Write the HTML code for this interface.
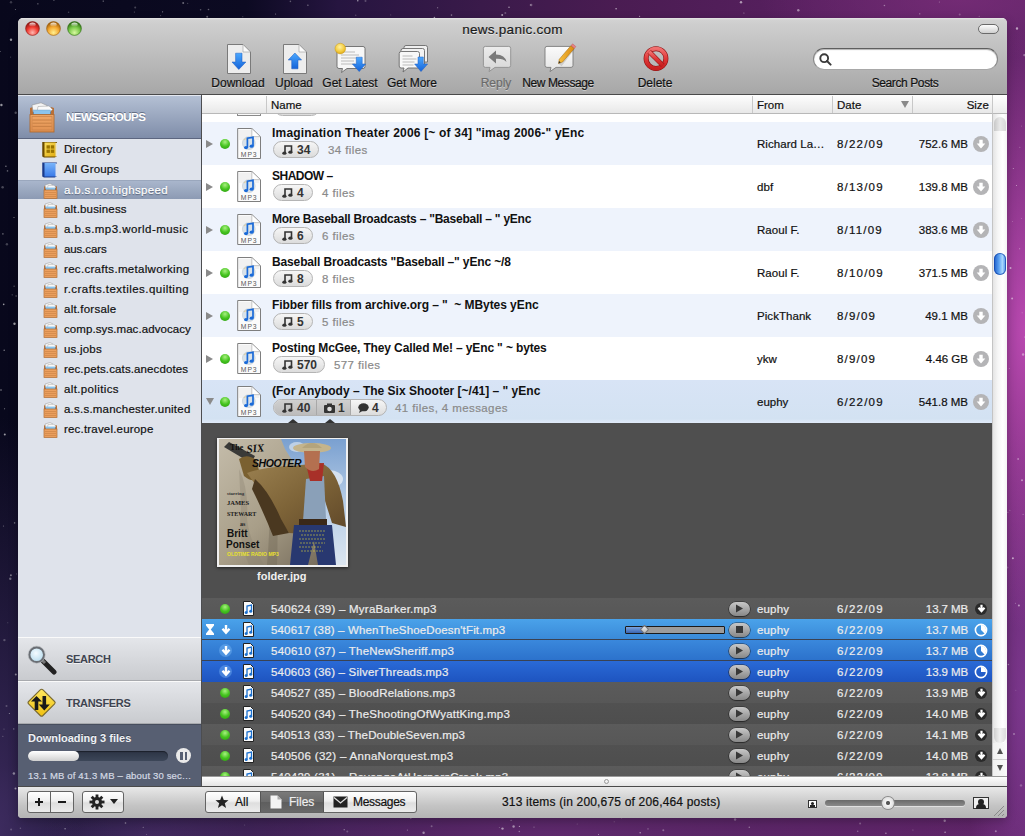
<!DOCTYPE html>
<html><head><meta charset="utf-8">
<style>
*{box-sizing:border-box;margin:0;padding:0}
html,body{width:1025px;height:836px;overflow:hidden}
body{position:relative;-webkit-text-stroke:.2px currentColor;font-family:"Liberation Sans",sans-serif;font-size:12px;color:#000;background:#1a1238}
.a{position:absolute}
.ttl,.pill,.pill b,svg,[style*="font-weight:bold"]{-webkit-text-stroke:0}
#bg{position:absolute;left:0;top:0;width:1025px;height:836px;
background:
 radial-gradient(ellipse 90px 300px at 1025px 330px,rgba(190,75,180,.95) 0%,rgba(160,60,160,0) 100%),
 radial-gradient(ellipse 60px 300px at 1025px 700px,rgba(130,60,150,.8) 0%,rgba(120,60,150,0) 100%),
 radial-gradient(ellipse 200px 60px at 960px 0px,rgba(120,45,120,.8) 0%,rgba(120,45,120,0) 100%),
 radial-gradient(ellipse 520px 90px at 560px 836px,rgba(95,42,110,.95) 0%,rgba(90,42,110,0) 100%),
 radial-gradient(ellipse 80px 420px at 0px 836px,rgba(62,44,96,.95) 0%,rgba(60,40,90,0) 100%),
 radial-gradient(ellipse 300px 80px at 150px 836px,rgba(62,44,96,.9) 0%,rgba(60,40,90,0) 100%),
 linear-gradient(90deg,#08081c 0%,#0c0a22 24%,#261540 33%,#3a1a4a 47%,#4a1c52 60%,#582060 80%,#602468 100%);}
#win{position:absolute;left:18px;top:18px;width:989px;height:800px;border-radius:5px 5px 4px 4px;overflow:hidden;background:#e0e0e0;box-shadow:0 3px 10px rgba(0,0,0,.25)}
#tb{position:absolute;left:0;top:0;width:989px;height:77px;background:linear-gradient(#e6e6e6 0,#d2d2d2 2px,#cecece 6px,#a7a7a7 76px);border-bottom:1px solid #4a4a4a}
.tl{position:absolute;top:4px;width:14px;height:14px;border-radius:50%}
.title{position:absolute;left:0;width:989px;top:4px;text-align:center;font-size:13.5px;letter-spacing:.25px;color:#1a1a1a;text-shadow:0 1px 0 rgba(255,255,255,.6)}
.tbl{position:absolute;top:58px;font-size:12px;color:#111;text-align:center;white-space:nowrap;text-shadow:0 1px 0 rgba(255,255,255,.45)}
#side{position:absolute;left:0;top:77px;width:184px;height:691px;background:#dfe3eb;border-right:1px solid #4c4d50}
#main{position:absolute;left:184px;top:77px;width:805px;height:691px;background:#4f4f4f}
#bot{position:absolute;left:0;top:768px;width:989px;height:32px;background:linear-gradient(#e8e8e8,#c4c4c4 60%,#b4b4b4);border-top:1px solid #4a4a4a}
.btn{position:absolute;top:4px;height:22px;border:1px solid #646464;border-radius:3px;background:linear-gradient(#ffffff,#f0f0f0 45%,#dedede 55%,#ececec)}
.si{position:absolute;left:0;width:183px;height:20px}
.si span{position:absolute;left:46px;top:3.5px;font-size:11.5px;white-space:nowrap;color:#111}
.crate{position:absolute;left:25px;top:3px}
.hdr{position:absolute;left:0;top:0;width:790px;height:19px;background:linear-gradient(#fefefe,#e8e8e8);border-bottom:1px solid #b8b8b8}
.hdr span{position:absolute;top:4px;font-size:11.5px;color:#111}
.hdiv{position:absolute;top:1px;width:1px;height:17px;background:#c8c8c8}
.row{position:absolute;left:0;width:790px;height:43px}
.tri{position:absolute;left:4px;top:18px;width:0;height:0;border-left:7px solid #8a8a8a;border-top:4px solid transparent;border-bottom:4px solid transparent}
.dot{position:absolute;left:18px;top:17px;width:10px;height:10px;border-radius:50%;background:radial-gradient(circle at 50% 30%,#a8f080 0,#46c420 50%,#2a9a10 100%)}
.mp3{position:absolute;left:35px;top:6px}
.ttl{position:absolute;left:70px;top:4px;font-size:12px;font-weight:bold;white-space:nowrap;color:#111}
.pill{position:absolute;left:71px;top:19px;height:17px;border-radius:9px;border:1px solid #b4b4b4;background:linear-gradient(#f6f6f6,#dcdcdc);white-space:nowrap;font-size:12px;font-weight:bold;color:#333}
.pill b{position:absolute;top:1px}
.cnt{position:absolute;top:22px;font-size:11.5px;letter-spacing:.4px;color:#8a8a8a;white-space:nowrap}
.col{position:absolute;top:15.5px;font-size:11.5px;color:#111;white-space:nowrap}
.sz{position:absolute;top:15.5px;right:24px;font-size:11.5px;color:#111;white-space:nowrap;letter-spacing:0}
.dl{position:absolute;left:771px;top:14px;width:16px;height:16px;border-radius:50%;background:#b4b4b6}
.frow{position:absolute;left:0;width:790px;height:21px}
.frow .t{position:absolute;left:69px;top:4.5px;font-size:11.5px;color:#ececec;white-space:nowrap}
.frow .c{position:absolute;top:4.5px;font-size:11.5px;letter-spacing:.15px;color:#ececec;white-space:nowrap}
.frow .s{position:absolute;right:24px;top:4.5px;font-size:11.5px;color:#ececec;white-space:nowrap;letter-spacing:-.1px}
.play{position:absolute;left:526.5px;top:3.5px;width:21px;height:14.5px;border-radius:8px;background:linear-gradient(#c8c8c8,#a4a4a4 55%,#888);box-shadow:0 0 0 .6px rgba(30,30,30,.8),0 1px 1px rgba(0,0,0,.4)}
.gdot{position:absolute;left:18px;top:6px;width:10px;height:10px;border-radius:50%;background:radial-gradient(circle at 50% 30%,#a8f080 0,#46c420 50%,#2a9a10 100%)}
</style></head><body>
<div id="bg"></div><svg class="a" style="left:0;top:0" width="1025" height="836"><circle cx="663.3" cy="830.2" r="1" fill="#fff" opacity="0.31"/><circle cx="4.2" cy="350.2" r="0.8" fill="#fff" opacity="0.44"/><circle cx="1009.3" cy="368.4" r="0.5" fill="#fff" opacity="0.34"/><circle cx="53.9" cy="0.2" r="0.6" fill="#fff" opacity="0.41"/><circle cx="749.3" cy="827.3" r="0.8" fill="#fff" opacity="0.39"/><circle cx="1009.9" cy="510.2" r="0.5" fill="#fff" opacity="0.39"/><circle cx="134.3" cy="11.9" r="0.5" fill="#fff" opacity="0.41"/><circle cx="187.7" cy="3.3" r="0.6" fill="#fff" opacity="0.27"/><circle cx="499.4" cy="827.5" r="0.6" fill="#fff" opacity="0.26"/><circle cx="451.5" cy="15.1" r="0.8" fill="#fff" opacity="0.41"/><circle cx="275.6" cy="14.1" r="0.5" fill="#fff" opacity="0.52"/><circle cx="355.7" cy="15.2" r="0.8" fill="#fff" opacity="0.21"/><circle cx="143.2" cy="827.2" r="0.5" fill="#fff" opacity="0.53"/><circle cx="14.6" cy="522.9" r="0.8" fill="#fff" opacity="0.37"/><circle cx="3.7" cy="304.4" r="0.8" fill="#fff" opacity="0.59"/><circle cx="365.5" cy="0.9" r="1" fill="#fff" opacity="0.23"/><circle cx="16.5" cy="573.9" r="0.6" fill="#fff" opacity="0.23"/><circle cx="1018.1" cy="459.0" r="0.8" fill="#fff" opacity="0.59"/><circle cx="959.7" cy="14.6" r="1" fill="#fff" opacity="0.23"/><circle cx="519.3" cy="831.5" r="0.8" fill="#fff" opacity="0.35"/><circle cx="200.6" cy="9.8" r="0.8" fill="#fff" opacity="0.30"/><circle cx="207.2" cy="16.8" r="1" fill="#fff" opacity="0.35"/><circle cx="1.4" cy="105.0" r="1.2" fill="#fff" opacity="0.57"/><circle cx="616.1" cy="8.7" r="0.8" fill="#fff" opacity="0.60"/><circle cx="6.9" cy="244.2" r="1.2" fill="#fff" opacity="0.23"/><circle cx="860.1" cy="823.4" r="1" fill="#fff" opacity="0.27"/><circle cx="2.9" cy="233.9" r="0.8" fill="#fff" opacity="0.37"/><circle cx="509.0" cy="7.3" r="0.8" fill="#fff" opacity="0.53"/><circle cx="1012.5" cy="221.4" r="0.5" fill="#fff" opacity="0.28"/><circle cx="431.6" cy="826.3" r="1" fill="#fff" opacity="0.27"/><circle cx="37.9" cy="3.8" r="0.6" fill="#fff" opacity="0.54"/><circle cx="208.5" cy="9.5" r="0.8" fill="#fff" opacity="0.36"/><circle cx="1012.9" cy="558.3" r="1" fill="#fff" opacity="0.58"/><circle cx="885.9" cy="833.2" r="0.8" fill="#fff" opacity="0.46"/><circle cx="183.2" cy="2.9" r="1" fill="#fff" opacity="0.39"/><circle cx="162.6" cy="11.8" r="0.6" fill="#fff" opacity="0.48"/><circle cx="0.4" cy="51.4" r="0.5" fill="#fff" opacity="0.36"/><circle cx="798.3" cy="10.3" r="1.2" fill="#fff" opacity="0.46"/><circle cx="1018.9" cy="605.5" r="1" fill="#fff" opacity="0.49"/><circle cx="6.5" cy="705.9" r="1" fill="#fff" opacity="0.23"/><circle cx="1021.5" cy="218.6" r="0.5" fill="#fff" opacity="0.25"/><circle cx="944.7" cy="820.7" r="1.2" fill="#fff" opacity="0.39"/><circle cx="434.4" cy="17.5" r="0.8" fill="#fff" opacity="0.57"/><circle cx="502.5" cy="828.6" r="1.2" fill="#fff" opacity="0.51"/><circle cx="1008.4" cy="664.5" r="0.8" fill="#fff" opacity="0.37"/><circle cx="125.5" cy="823.0" r="0.8" fill="#fff" opacity="0.46"/><circle cx="995.8" cy="831.2" r="1" fill="#fff" opacity="0.38"/><circle cx="423.6" cy="832.8" r="1.2" fill="#fff" opacity="0.46"/><circle cx="1007.5" cy="567.5" r="1" fill="#fff" opacity="0.20"/><circle cx="15.4" cy="9.6" r="0.5" fill="#fff" opacity="0.46"/><circle cx="884.4" cy="5.5" r="0.8" fill="#fff" opacity="0.39"/><circle cx="307.9" cy="5.2" r="0.6" fill="#fff" opacity="0.53"/><circle cx="13.8" cy="728.9" r="0.6" fill="#fff" opacity="0.51"/><circle cx="14.5" cy="323.7" r="1.2" fill="#fff" opacity="0.60"/><circle cx="437.7" cy="7.8" r="0.5" fill="#fff" opacity="0.59"/><circle cx="743.9" cy="13.0" r="0.6" fill="#fff" opacity="0.44"/><circle cx="290.4" cy="1.4" r="0.8" fill="#fff" opacity="0.31"/><circle cx="912.9" cy="830.0" r="0.6" fill="#fff" opacity="0.31"/><circle cx="1022.1" cy="312.7" r="0.5" fill="#fff" opacity="0.35"/><circle cx="347.3" cy="831.5" r="1" fill="#fff" opacity="0.23"/><circle cx="1016.5" cy="185.4" r="0.5" fill="#fff" opacity="0.58"/><circle cx="5.9" cy="166.3" r="0.8" fill="#fff" opacity="0.44"/><circle cx="10.3" cy="578.7" r="1.2" fill="#fff" opacity="0.36"/><circle cx="505.3" cy="12.9" r="1" fill="#fff" opacity="0.25"/><circle cx="577.2" cy="824.1" r="0.5" fill="#fff" opacity="0.27"/><circle cx="4.8" cy="434.6" r="1" fill="#fff" opacity="0.59"/><circle cx="979.2" cy="16.3" r="0.6" fill="#fff" opacity="0.30"/><circle cx="1010.5" cy="268.0" r="1" fill="#fff" opacity="0.54"/><circle cx="12.2" cy="294.8" r="0.6" fill="#fff" opacity="0.33"/><circle cx="534.0" cy="827.1" r="0.6" fill="#fff" opacity="0.37"/><circle cx="945.1" cy="832.3" r="0.8" fill="#fff" opacity="0.51"/><circle cx="4.4" cy="640.1" r="1.2" fill="#fff" opacity="0.25"/><circle cx="407.4" cy="830.1" r="0.6" fill="#fff" opacity="0.37"/><circle cx="11.0" cy="39.7" r="1.2" fill="#fff" opacity="0.56"/><circle cx="10.6" cy="57.1" r="0.6" fill="#fff" opacity="0.24"/><circle cx="640.2" cy="832.8" r="0.8" fill="#fff" opacity="0.48"/><circle cx="11.0" cy="2.3" r="1.2" fill="#fff" opacity="0.20"/><circle cx="1022.0" cy="480.3" r="1" fill="#fff" opacity="0.44"/><circle cx="639.6" cy="16.3" r="0.6" fill="#fff" opacity="0.56"/><circle cx="357.8" cy="0.8" r="0.8" fill="#fff" opacity="0.56"/><circle cx="1023.1" cy="514.4" r="0.6" fill="#fff" opacity="0.31"/><circle cx="11.1" cy="829.4" r="1" fill="#fff" opacity="0.23"/><circle cx="735.1" cy="819.5" r="1.2" fill="#fff" opacity="0.31"/><circle cx="1024.9" cy="337.1" r="0.5" fill="#fff" opacity="0.58"/><circle cx="741.0" cy="2.3" r="1.2" fill="#fff" opacity="0.54"/><circle cx="1015.4" cy="603.3" r="0.5" fill="#fff" opacity="0.38"/><circle cx="1013.3" cy="168.5" r="0.5" fill="#fff" opacity="0.57"/><circle cx="14.1" cy="286.2" r="0.6" fill="#fff" opacity="0.39"/><circle cx="65.1" cy="828.8" r="0.8" fill="#fff" opacity="0.43"/><circle cx="1017.0" cy="28.5" r="1.2" fill="#fff" opacity="0.56"/><circle cx="1021.5" cy="126.1" r="0.6" fill="#fff" opacity="0.20"/><circle cx="1012.1" cy="298.4" r="1" fill="#fff" opacity="0.49"/><circle cx="242.8" cy="16.8" r="0.5" fill="#fff" opacity="0.36"/><circle cx="13.9" cy="773.5" r="1.2" fill="#fff" opacity="0.46"/><circle cx="160.6" cy="15.6" r="0.6" fill="#fff" opacity="0.26"/><circle cx="135.2" cy="7.6" r="1" fill="#fff" opacity="0.24"/><circle cx="410.9" cy="818.5" r="0.5" fill="#fff" opacity="0.45"/><circle cx="15.8" cy="674.4" r="1" fill="#fff" opacity="0.47"/><circle cx="511.1" cy="820.4" r="0.6" fill="#fff" opacity="0.39"/><circle cx="4.0" cy="729.1" r="0.6" fill="#fff" opacity="0.26"/><circle cx="1019.7" cy="248.8" r="0.5" fill="#fff" opacity="0.52"/><circle cx="15.7" cy="112.7" r="1.2" fill="#fff" opacity="0.29"/><circle cx="20.4" cy="828.3" r="0.8" fill="#fff" opacity="0.23"/><circle cx="2.6" cy="187.2" r="1.2" fill="#fff" opacity="0.26"/><circle cx="10.9" cy="575.3" r="1" fill="#fff" opacity="0.42"/><circle cx="146.6" cy="834.6" r="0.5" fill="#fff" opacity="0.30"/><circle cx="513.6" cy="826.5" r="1.2" fill="#fff" opacity="0.49"/><circle cx="1015.8" cy="690.2" r="0.5" fill="#fff" opacity="0.23"/><circle cx="1024.4" cy="55.1" r="1.2" fill="#fff" opacity="0.35"/><circle cx="530.3" cy="4.9" r="0.6" fill="#fff" opacity="0.35"/><circle cx="390.7" cy="14.9" r="0.6" fill="#fff" opacity="0.20"/><circle cx="1019.8" cy="147.3" r="0.5" fill="#fff" opacity="0.38"/><circle cx="598.5" cy="834.4" r="0.5" fill="#fff" opacity="0.55"/><circle cx="531.2" cy="5.0" r="1.2" fill="#fff" opacity="0.31"/><circle cx="1021.0" cy="785.4" r="1.2" fill="#fff" opacity="0.23"/><circle cx="502.2" cy="14.9" r="1" fill="#fff" opacity="0.56"/><circle cx="103.2" cy="1.1" r="0.6" fill="#fff" opacity="0.58"/><circle cx="15.5" cy="788.6" r="1" fill="#fff" opacity="0.52"/><circle cx="1023.1" cy="354.5" r="1.2" fill="#fff" opacity="0.41"/><circle cx="614.2" cy="821.7" r="0.5" fill="#fff" opacity="0.29"/><circle cx="2.9" cy="736.3" r="0.5" fill="#fff" opacity="0.40"/><circle cx="4.6" cy="408.8" r="0.5" fill="#fff" opacity="0.58"/><circle cx="344.2" cy="829.7" r="0.6" fill="#fff" opacity="0.48"/><circle cx="519.4" cy="826.4" r="0.6" fill="#fff" opacity="0.54"/><circle cx="9.3" cy="713.5" r="0.5" fill="#fff" opacity="0.58"/><circle cx="3.5" cy="526.0" r="0.6" fill="#fff" opacity="0.38"/><circle cx="919.8" cy="13.8" r="0.6" fill="#fff" opacity="0.52"/><circle cx="16.2" cy="295.9" r="1" fill="#fff" opacity="0.21"/><circle cx="648.0" cy="828.9" r="0.8" fill="#fff" opacity="0.24"/><circle cx="7.5" cy="170.9" r="0.8" fill="#fff" opacity="0.35"/><circle cx="244.6" cy="825.0" r="0.6" fill="#fff" opacity="0.20"/><circle cx="1.0" cy="390.0" r="1" fill="#fff" opacity="0.30"/><circle cx="939.3" cy="1.9" r="0.5" fill="#fff" opacity="0.42"/><circle cx="7.8" cy="622.8" r="0.5" fill="#fff" opacity="0.27"/><circle cx="1007.9" cy="512.2" r="0.5" fill="#fff" opacity="0.42"/><circle cx="621.6" cy="818.1" r="0.6" fill="#fff" opacity="0.20"/><circle cx="857.7" cy="831.2" r="0.8" fill="#fff" opacity="0.31"/><circle cx="14.0" cy="217.5" r="0.5" fill="#fff" opacity="0.60"/><circle cx="68.6" cy="12.2" r="0.8" fill="#fff" opacity="0.23"/><circle cx="1014.0" cy="734.1" r="1" fill="#fff" opacity="0.34"/></svg>
<div id="win">
<div id="tb">
<svg class="a" style="left:7px;top:3px" width="15" height="15" viewBox="0 0 15 15"><defs><radialGradient id="tlr" cx=".5" cy=".8" r=".75"><stop offset="0" stop-color="#ffb8b0"/><stop offset=".55" stop-color="#f03a30"/><stop offset="1" stop-color="#8a1410"/></radialGradient><linearGradient id="tlrh" x1="0" y1="0" x2="0" y2="1"><stop offset="0" stop-color="#fff" stop-opacity=".9"/><stop offset="1" stop-color="#fff" stop-opacity="0"/></linearGradient></defs><circle cx="7.5" cy="7.5" r="6.9" fill="url(#tlr)" stroke="#8a1410" stroke-width=".6"/><ellipse cx="7.5" cy="3.6" rx="3.2" ry="2.2" fill="url(#tlrh)"/></svg>
<svg class="a" style="left:28px;top:3px" width="15" height="15" viewBox="0 0 15 15"><defs><radialGradient id="tly" cx=".5" cy=".8" r=".75"><stop offset="0" stop-color="#fff090"/><stop offset=".55" stop-color="#f4a830"/><stop offset="1" stop-color="#9a5a08"/></radialGradient><linearGradient id="tlyh" x1="0" y1="0" x2="0" y2="1"><stop offset="0" stop-color="#fff" stop-opacity=".9"/><stop offset="1" stop-color="#fff" stop-opacity="0"/></linearGradient></defs><circle cx="7.5" cy="7.5" r="6.9" fill="url(#tly)" stroke="#9a5a08" stroke-width=".6"/><ellipse cx="7.5" cy="3.6" rx="3.2" ry="2.2" fill="url(#tlyh)"/></svg>
<svg class="a" style="left:49px;top:3px" width="15" height="15" viewBox="0 0 15 15"><defs><radialGradient id="tlg" cx=".5" cy=".8" r=".75"><stop offset="0" stop-color="#d8f8a0"/><stop offset=".55" stop-color="#78c848"/><stop offset="1" stop-color="#2a6a10"/></radialGradient><linearGradient id="tlgh" x1="0" y1="0" x2="0" y2="1"><stop offset="0" stop-color="#fff" stop-opacity=".9"/><stop offset="1" stop-color="#fff" stop-opacity="0"/></linearGradient></defs><circle cx="7.5" cy="7.5" r="6.9" fill="url(#tlg)" stroke="#2a6a10" stroke-width=".6"/><ellipse cx="7.5" cy="3.6" rx="3.2" ry="2.2" fill="url(#tlgh)"/></svg>
<div class="title">news.panic.com</div>
<div class="tbl" style="left:160px;width:120px;color:#111">Download</div>
<div class="tbl" style="left:216px;width:120px;color:#111">Upload</div>
<div class="tbl" style="left:272px;width:120px;color:#111">Get Latest</div>
<div class="tbl" style="left:334px;width:120px;color:#111">Get More</div>
<div class="tbl" style="left:418px;width:120px;color:#6a6a6a">Reply</div>
<div class="tbl" style="left:480px;width:120px;color:#111;letter-spacing:-.4px">New Message</div>
<div class="tbl" style="left:577px;width:120px;color:#111">Delete</div>
<div class="tbl" style="left:827px;width:120px;color:#111;letter-spacing:-.4px">Search Posts</div>
<svg class="a" style="left:207px;top:26px" width="28" height="31" viewBox="0 0 28 31"><defs><linearGradient id="ag207" x1="0" y1="0" x2="0" y2="1"><stop offset="0" stop-color="#4aa8ff"/><stop offset="1" stop-color="#1462d8"/></linearGradient></defs><path d="M2.5 .5 H18 L25.5 8 V29.5 H2.5 Z" fill="#ededed" stroke="#7a7a7a"/><path d="M18 .5 V8 H25.5Z" fill="#fafafa" stroke="#9a9a9a" stroke-width=".6"/><path d="M10.6 9.2 H17 V18 H20.9 L13.8 25.5 L7 18 H10.6Z" fill="url(#ag207)" stroke="#1a5ac0" stroke-width=".5"/></svg>
<svg class="a" style="left:263px;top:26px" width="28" height="31" viewBox="0 0 28 31"><defs><linearGradient id="ag263" x1="0" y1="0" x2="0" y2="1"><stop offset="0" stop-color="#4aa8ff"/><stop offset="1" stop-color="#1462d8"/></linearGradient></defs><path d="M2.5 .5 H18 L25.5 8 V29.5 H2.5 Z" fill="#ededed" stroke="#7a7a7a"/><path d="M18 .5 V8 H25.5Z" fill="#fafafa" stroke="#9a9a9a" stroke-width=".6"/><path d="M13.9 9 L20.6 16 H17 V24.8 H10.7 V16 H7.2Z" fill="url(#ag263)" stroke="#1a5ac0" stroke-width=".5"/></svg>
<svg class="a" style="left:315px;top:24px" width="36" height="34" viewBox="0 0 36 34"><defs><linearGradient id="gl" x1="0" y1="0" x2="0" y2="1"><stop offset="0" stop-color="#4aa8ff"/><stop offset="1" stop-color="#1462d8"/></linearGradient><radialGradient id="yd" cx=".45" cy=".35" r=".7"><stop offset="0" stop-color="#fff2a0"/><stop offset=".6" stop-color="#f4cc40"/><stop offset="1" stop-color="#d8a010"/></radialGradient></defs><path d="M6 4.5 H30 Q32 4.5 32 6.5 V24.5 Q32 26.5 30 26.5 H14 L8.5 30.5 L9.5 26.5 H6 Q4 26.5 4 24.5 V6.5 Q4 4.5 6 4.5Z" fill="#f7f7f7" stroke="#6a6a6a" stroke-width=".9"/><path d="M8 10h14M8 13h18M8 16h16M8 19h13M8 22h14" stroke="#a0a0a0" stroke-width=".7"/><circle cx="7.3" cy="6.6" r="5.3" fill="url(#yd)" stroke="#c89a20" stroke-width=".5"/><path d="M23.3 15.2 H29.2 V22 H32.6 L26.2 29.6 L19.4 22 H23.3Z" fill="url(#gl)" stroke="#1a5ac0" stroke-width=".5"/></svg>
<svg class="a" style="left:379px;top:24px" width="34" height="34" viewBox="0 0 34 34"><defs><linearGradient id="gm" x1="0" y1="0" x2="0" y2="1"><stop offset="0" stop-color="#4aa8ff"/><stop offset="1" stop-color="#1462d8"/></linearGradient></defs><path d="M9 3.5 H28.5 Q30.5 3.5 30.5 5.5 V20 H7 V5.5 Q7 3.5 9 3.5Z" fill="#efefef" stroke="#6a6a6a" stroke-width=".9"/><path d="M6 6.5 H25.5 Q27.5 6.5 27.5 8.5 V23 H4 V8.5 Q4 6.5 6 6.5Z" fill="#f3f3f3" stroke="#6a6a6a" stroke-width=".9"/><path d="M4.2 9.5 H20.5 Q22.5 9.5 22.5 11.5 V24 Q22.5 26 20.5 26 H11 L6 30 L7 26 H4.2 Q2.2 26 2.2 24 V11.5 Q2.2 9.5 4.2 9.5Z" fill="#f8f8f8" stroke="#6a6a6a" stroke-width=".9"/><path d="M5.5 14h10M5.5 17h14M5.5 20h12M5.5 23h11" stroke="#a0a0a0" stroke-width=".7"/><path d="M21 15 H26.3 V22 H30.6 L24 29.6 L17.6 22 H21Z" fill="url(#gm)" stroke="#1a5ac0" stroke-width=".5"/></svg>
<svg class="a" style="left:464px;top:26px" width="32" height="30" viewBox="0 0 32 30"><defs><linearGradient id="rb" x1="0" y1="0" x2="0" y2="1"><stop offset="0" stop-color="#ececec"/><stop offset="1" stop-color="#d6d6d6"/></linearGradient></defs><path d="M3.4 2.4 H26.7 Q28.7 2.4 28.7 4.4 V21.4 Q28.7 23.4 26.7 23.4 H13 L7 27.6 L8 23.4 H3.4 Q1.4 23.4 1.4 21.4 V4.4 Q1.4 2.4 3.4 2.4Z" fill="url(#rb)" stroke="#8e8e8e" stroke-width=".9"/><path d="M6.5 13 L14 6.5 V10.5 Q23 10.5 24.5 18 Q21 14.2 14 14.8 V19.5Z" fill="#7a7a7a"/></svg>
<svg class="a" style="left:525px;top:24px" width="34" height="32" viewBox="0 0 34 32"><defs><linearGradient id="nb" x1="0" y1="0" x2="0" y2="1"><stop offset="0" stop-color="#fbfbfb"/><stop offset="1" stop-color="#e4e4e4"/></linearGradient><linearGradient id="pc" x1="0" y1="0" x2="1" y2="0"><stop offset="0" stop-color="#f8c040"/><stop offset="1" stop-color="#d88a10"/></linearGradient></defs><path d="M4 4.4 H28 Q30 4.4 30 6.4 V23.4 Q30 25.4 28 25.4 H13 L7 29.6 L8 25.4 H4 Q2 25.4 2 23.4 V6.4 Q2 4.4 4 4.4Z" fill="url(#nb)" stroke="#7a7a7a" stroke-width=".9"/><path d="M17 23 L30 6" stroke="#000" stroke-opacity=".12" stroke-width="4"/><path d="M15.5 21.6 L16.3 17.2 L28 3.6 L31.3 6.4 L19.6 20 Z" fill="url(#pc)" stroke="#a06a10" stroke-width=".5"/><path d="M28 3.6 L29.6 1.8 L32.9 4.6 L31.3 6.4Z" fill="#e88080" stroke="#b05050" stroke-width=".4"/><path d="M15.5 21.6 L16 19 L17.8 20.6Z" fill="#333"/></svg>
<svg class="a" style="left:625px;top:27px" width="26" height="27" viewBox="0 0 26 27"><defs><linearGradient id="dg" x1="0" y1="0" x2="0" y2="1"><stop offset="0" stop-color="#f07070"/><stop offset=".5" stop-color="#e03838"/><stop offset="1" stop-color="#c82020"/></linearGradient></defs><circle cx="13" cy="13.6" r="9.9" fill="none" stroke="#8a1010" stroke-width="5"/><circle cx="13" cy="13.6" r="9.9" fill="none" stroke="url(#dg)" stroke-width="3.8"/><path d="M6.2 6.8 L19.8 20.4" stroke="#9a1818" stroke-width="4.8"/><path d="M6.2 6.8 L19.8 20.4" stroke="url(#dg)" stroke-width="3.6"/></svg>
<div class="a" style="left:795px;top:30px;width:185px;height:22px;border-radius:11px;background:#fff;border:1px solid;border-color:#5e5e5e #868686 #a8a8a8;box-shadow:inset 0 1px 1px rgba(0,0,0,.3)"><svg class="a" style="left:4.5px;top:4px" width="13" height="13" viewBox="0 0 13 13"><circle cx="5.2" cy="5.2" r="3.9" fill="none" stroke="#3a3a3a" stroke-width="1.9"/><path d="M8 8 L11.6 11.6" stroke="#3a3a3a" stroke-width="2" stroke-linecap="round"/></svg></div>
<div class="a" style="left:960px;top:6px;width:21px;height:10px;border-radius:5px;border:1px solid #6a6a6a;background:linear-gradient(#fdfdfd,#cfcfcf)"></div>
</div>
<div id="side">
<div class="a" style="left:0;top:0;width:183px;height:44px;background:linear-gradient(#b4c0d4,#7f8da9);border-top:1px solid #e4e8f0;border-bottom:1px solid #5c6680">
<svg class="a" style="left:11px;top:6px" width="27" height="32" viewBox="0 0 27 32"><defs><linearGradient id="cf" x1="0" y1="0" x2="0" y2="1"><stop offset="0" stop-color="#f0a868"/><stop offset="1" stop-color="#e09050"/></linearGradient></defs><path d="M1 6 L4 5 V13 H1Z M22 5 L25 6 V13 H22Z" fill="#b87038"/><rect x="4" y="6" width="18" height="7" fill="#4a3a30"/><path d="M3 3 L12 0.8 L18 3.5 L16 9 L4 10Z" fill="#f4f4f4" stroke="#888" stroke-width=".5"/><path d="M9 4.5 L20 4 L23.5 7.5 L21 10 L8 10Z" fill="#fafafa" stroke="#999" stroke-width=".5"/><rect x="4.5" y="8" width="17" height="4.6" fill="#8cc4ec" stroke="#6a9ac0" stroke-width=".4"/><rect x="1" y="12.6" width="24" height="17.4" fill="url(#cf)" stroke="#b06a30" stroke-width=".9"/><rect x="3" y="14.6" width="20" height="13.4" fill="none" stroke="#c88048" stroke-width=".7"/><path d="M3.5 18h19M3.5 21.2h19M3.5 24.4h19" stroke="#c07a40" stroke-width=".8"/></svg>
<div class="a" style="left:48px;top:15px;font-size:11.5px;font-weight:bold;letter-spacing:-.5px;color:#fff;text-shadow:0 -1px 0 rgba(60,70,90,.6)">NEWSGROUPS</div></div>
<div class="si" style="top:44px"><svg class="a" style="left:22px;top:2px" width="18" height="17" viewBox="0 0 16 17" preserveAspectRatio="none"><defs><linearGradient id="bky" x1="0" y1="0" x2="1" y2="1"><stop offset="0" stop-color="#fbe060"/><stop offset="1" stop-color="#e0ac10"/></linearGradient></defs><path d="M2 1 H15 V15.5 L13 16.5 H3.5 L2 15.5Z" fill="#6a4a00"/><rect x="4" y="1.5" width="10" height="14" fill="url(#bky)"/><rect x="13.8" y="2" width="1.2" height="13.5" fill="#fffbe0"/><rect x="5.8" y="4.3" width="3" height="3.3" fill="#9a7400"/><rect x="9.6" y="4.3" width="3" height="3.3" fill="#9a7400"/><rect x="5.8" y="8.6" width="3" height="3.3" fill="#9a7400"/><rect x="9.6" y="8.6" width="3" height="3.3" fill="#9a7400"/></svg><span style="letter-spacing:.3px">Directory</span></div>
<div class="si" style="top:64px"><svg class="a" style="left:22px;top:2px" width="18" height="17" viewBox="0 0 16 17" preserveAspectRatio="none"><defs><linearGradient id="bkb" x1="0" y1="0" x2="0" y2="1"><stop offset="0" stop-color="#78b4fa"/><stop offset="1" stop-color="#3a7ae8"/></linearGradient></defs><path d="M2 1.5 H15 V15.5 L13 16.5 H3.5 L2 15.5Z" fill="#1a3a8a"/><rect x="4" y="2" width="10" height="13.5" fill="url(#bkb)"/><rect x="13.8" y="2.5" width="1.2" height="13" fill="#f4f8ff"/></svg><span style="letter-spacing:.15px">All Groups</span></div>
<div class="si" style="top:85px;height:19px;background:linear-gradient(#a9b6cc,#8c9ab3);border-top:1px solid #9aa7bd"><div style="position:absolute;left:0;top:-1px"><svg class="crate" width="15" height="16" viewBox="0 0 15 16"><path d="M1 3.5 L2.5 3 V7 H1Z M12.5 3 L14 3.5 V7 H12.5Z" fill="#b87038"/><rect x="2.5" y="3.5" width="10" height="3.5" fill="#4a3a30"/><path d="M2 2 L7 .5 L10 2 L9 5 L2.5 5.5Z" fill="#f4f4f4" stroke="#888" stroke-width=".4"/><path d="M5 2.6 L11 2.3 L13 4.2 L11.5 5.5 L4.5 5.5Z" fill="#fafafa" stroke="#999" stroke-width=".4"/><rect x="2.8" y="4.6" width="9.4" height="2.6" fill="#8cc4ec"/><rect x="1" y="7" width="13" height="8.5" fill="#eca060" stroke="#b06a30" stroke-width=".7"/><path d="M2 9.6h11M2 11.6h11M2 13.6h11" stroke="#c47c40" stroke-width=".6"/></svg></div><span style="color:#fff;text-shadow:0 1px 1px rgba(40,50,70,.6);top:2.5px;letter-spacing:0.36px">a.b.s.r.o.highspeed</span></div>
<div class="si" style="top:104px"><svg class="crate" width="15" height="16" viewBox="0 0 15 16"><path d="M1 3.5 L2.5 3 V7 H1Z M12.5 3 L14 3.5 V7 H12.5Z" fill="#b87038"/><rect x="2.5" y="3.5" width="10" height="3.5" fill="#4a3a30"/><path d="M2 2 L7 .5 L10 2 L9 5 L2.5 5.5Z" fill="#f4f4f4" stroke="#888" stroke-width=".4"/><path d="M5 2.6 L11 2.3 L13 4.2 L11.5 5.5 L4.5 5.5Z" fill="#fafafa" stroke="#999" stroke-width=".4"/><rect x="2.8" y="4.6" width="9.4" height="2.6" fill="#8cc4ec"/><rect x="1" y="7" width="13" height="8.5" fill="#eca060" stroke="#b06a30" stroke-width=".7"/><path d="M2 9.6h11M2 11.6h11M2 13.6h11" stroke="#c47c40" stroke-width=".6"/></svg><span style="letter-spacing:0.17px">alt.business</span></div>
<div class="si" style="top:124px"><svg class="crate" width="15" height="16" viewBox="0 0 15 16"><path d="M1 3.5 L2.5 3 V7 H1Z M12.5 3 L14 3.5 V7 H12.5Z" fill="#b87038"/><rect x="2.5" y="3.5" width="10" height="3.5" fill="#4a3a30"/><path d="M2 2 L7 .5 L10 2 L9 5 L2.5 5.5Z" fill="#f4f4f4" stroke="#888" stroke-width=".4"/><path d="M5 2.6 L11 2.3 L13 4.2 L11.5 5.5 L4.5 5.5Z" fill="#fafafa" stroke="#999" stroke-width=".4"/><rect x="2.8" y="4.6" width="9.4" height="2.6" fill="#8cc4ec"/><rect x="1" y="7" width="13" height="8.5" fill="#eca060" stroke="#b06a30" stroke-width=".7"/><path d="M2 9.6h11M2 11.6h11M2 13.6h11" stroke="#c47c40" stroke-width=".6"/></svg><span style="letter-spacing:0.45px">a.b.s.mp3.world-music</span></div>
<div class="si" style="top:144px"><svg class="crate" width="15" height="16" viewBox="0 0 15 16"><path d="M1 3.5 L2.5 3 V7 H1Z M12.5 3 L14 3.5 V7 H12.5Z" fill="#b87038"/><rect x="2.5" y="3.5" width="10" height="3.5" fill="#4a3a30"/><path d="M2 2 L7 .5 L10 2 L9 5 L2.5 5.5Z" fill="#f4f4f4" stroke="#888" stroke-width=".4"/><path d="M5 2.6 L11 2.3 L13 4.2 L11.5 5.5 L4.5 5.5Z" fill="#fafafa" stroke="#999" stroke-width=".4"/><rect x="2.8" y="4.6" width="9.4" height="2.6" fill="#8cc4ec"/><rect x="1" y="7" width="13" height="8.5" fill="#eca060" stroke="#b06a30" stroke-width=".7"/><path d="M2 9.6h11M2 11.6h11M2 13.6h11" stroke="#c47c40" stroke-width=".6"/></svg><span style="letter-spacing:-0.1px">aus.cars</span></div>
<div class="si" style="top:164px"><svg class="crate" width="15" height="16" viewBox="0 0 15 16"><path d="M1 3.5 L2.5 3 V7 H1Z M12.5 3 L14 3.5 V7 H12.5Z" fill="#b87038"/><rect x="2.5" y="3.5" width="10" height="3.5" fill="#4a3a30"/><path d="M2 2 L7 .5 L10 2 L9 5 L2.5 5.5Z" fill="#f4f4f4" stroke="#888" stroke-width=".4"/><path d="M5 2.6 L11 2.3 L13 4.2 L11.5 5.5 L4.5 5.5Z" fill="#fafafa" stroke="#999" stroke-width=".4"/><rect x="2.8" y="4.6" width="9.4" height="2.6" fill="#8cc4ec"/><rect x="1" y="7" width="13" height="8.5" fill="#eca060" stroke="#b06a30" stroke-width=".7"/><path d="M2 9.6h11M2 11.6h11M2 13.6h11" stroke="#c47c40" stroke-width=".6"/></svg><span style="letter-spacing:0.31px">rec.crafts.metalworking</span></div>
<div class="si" style="top:184px"><svg class="crate" width="15" height="16" viewBox="0 0 15 16"><path d="M1 3.5 L2.5 3 V7 H1Z M12.5 3 L14 3.5 V7 H12.5Z" fill="#b87038"/><rect x="2.5" y="3.5" width="10" height="3.5" fill="#4a3a30"/><path d="M2 2 L7 .5 L10 2 L9 5 L2.5 5.5Z" fill="#f4f4f4" stroke="#888" stroke-width=".4"/><path d="M5 2.6 L11 2.3 L13 4.2 L11.5 5.5 L4.5 5.5Z" fill="#fafafa" stroke="#999" stroke-width=".4"/><rect x="2.8" y="4.6" width="9.4" height="2.6" fill="#8cc4ec"/><rect x="1" y="7" width="13" height="8.5" fill="#eca060" stroke="#b06a30" stroke-width=".7"/><path d="M2 9.6h11M2 11.6h11M2 13.6h11" stroke="#c47c40" stroke-width=".6"/></svg><span style="letter-spacing:0.46px">r.crafts.textiles.quilting</span></div>
<div class="si" style="top:204px"><svg class="crate" width="15" height="16" viewBox="0 0 15 16"><path d="M1 3.5 L2.5 3 V7 H1Z M12.5 3 L14 3.5 V7 H12.5Z" fill="#b87038"/><rect x="2.5" y="3.5" width="10" height="3.5" fill="#4a3a30"/><path d="M2 2 L7 .5 L10 2 L9 5 L2.5 5.5Z" fill="#f4f4f4" stroke="#888" stroke-width=".4"/><path d="M5 2.6 L11 2.3 L13 4.2 L11.5 5.5 L4.5 5.5Z" fill="#fafafa" stroke="#999" stroke-width=".4"/><rect x="2.8" y="4.6" width="9.4" height="2.6" fill="#8cc4ec"/><rect x="1" y="7" width="13" height="8.5" fill="#eca060" stroke="#b06a30" stroke-width=".7"/><path d="M2 9.6h11M2 11.6h11M2 13.6h11" stroke="#c47c40" stroke-width=".6"/></svg><span style="letter-spacing:0.24px">alt.forsale</span></div>
<div class="si" style="top:224px"><svg class="crate" width="15" height="16" viewBox="0 0 15 16"><path d="M1 3.5 L2.5 3 V7 H1Z M12.5 3 L14 3.5 V7 H12.5Z" fill="#b87038"/><rect x="2.5" y="3.5" width="10" height="3.5" fill="#4a3a30"/><path d="M2 2 L7 .5 L10 2 L9 5 L2.5 5.5Z" fill="#f4f4f4" stroke="#888" stroke-width=".4"/><path d="M5 2.6 L11 2.3 L13 4.2 L11.5 5.5 L4.5 5.5Z" fill="#fafafa" stroke="#999" stroke-width=".4"/><rect x="2.8" y="4.6" width="9.4" height="2.6" fill="#8cc4ec"/><rect x="1" y="7" width="13" height="8.5" fill="#eca060" stroke="#b06a30" stroke-width=".7"/><path d="M2 9.6h11M2 11.6h11M2 13.6h11" stroke="#c47c40" stroke-width=".6"/></svg><span style="letter-spacing:0.08px">comp.sys.mac.advocacy</span></div>
<div class="si" style="top:244px"><svg class="crate" width="15" height="16" viewBox="0 0 15 16"><path d="M1 3.5 L2.5 3 V7 H1Z M12.5 3 L14 3.5 V7 H12.5Z" fill="#b87038"/><rect x="2.5" y="3.5" width="10" height="3.5" fill="#4a3a30"/><path d="M2 2 L7 .5 L10 2 L9 5 L2.5 5.5Z" fill="#f4f4f4" stroke="#888" stroke-width=".4"/><path d="M5 2.6 L11 2.3 L13 4.2 L11.5 5.5 L4.5 5.5Z" fill="#fafafa" stroke="#999" stroke-width=".4"/><rect x="2.8" y="4.6" width="9.4" height="2.6" fill="#8cc4ec"/><rect x="1" y="7" width="13" height="8.5" fill="#eca060" stroke="#b06a30" stroke-width=".7"/><path d="M2 9.6h11M2 11.6h11M2 13.6h11" stroke="#c47c40" stroke-width=".6"/></svg><span style="letter-spacing:0.21px">us.jobs</span></div>
<div class="si" style="top:264px"><svg class="crate" width="15" height="16" viewBox="0 0 15 16"><path d="M1 3.5 L2.5 3 V7 H1Z M12.5 3 L14 3.5 V7 H12.5Z" fill="#b87038"/><rect x="2.5" y="3.5" width="10" height="3.5" fill="#4a3a30"/><path d="M2 2 L7 .5 L10 2 L9 5 L2.5 5.5Z" fill="#f4f4f4" stroke="#888" stroke-width=".4"/><path d="M5 2.6 L11 2.3 L13 4.2 L11.5 5.5 L4.5 5.5Z" fill="#fafafa" stroke="#999" stroke-width=".4"/><rect x="2.8" y="4.6" width="9.4" height="2.6" fill="#8cc4ec"/><rect x="1" y="7" width="13" height="8.5" fill="#eca060" stroke="#b06a30" stroke-width=".7"/><path d="M2 9.6h11M2 11.6h11M2 13.6h11" stroke="#c47c40" stroke-width=".6"/></svg><span style="letter-spacing:0.12px">rec.pets.cats.anecdotes</span></div>
<div class="si" style="top:284px"><svg class="crate" width="15" height="16" viewBox="0 0 15 16"><path d="M1 3.5 L2.5 3 V7 H1Z M12.5 3 L14 3.5 V7 H12.5Z" fill="#b87038"/><rect x="2.5" y="3.5" width="10" height="3.5" fill="#4a3a30"/><path d="M2 2 L7 .5 L10 2 L9 5 L2.5 5.5Z" fill="#f4f4f4" stroke="#888" stroke-width=".4"/><path d="M5 2.6 L11 2.3 L13 4.2 L11.5 5.5 L4.5 5.5Z" fill="#fafafa" stroke="#999" stroke-width=".4"/><rect x="2.8" y="4.6" width="9.4" height="2.6" fill="#8cc4ec"/><rect x="1" y="7" width="13" height="8.5" fill="#eca060" stroke="#b06a30" stroke-width=".7"/><path d="M2 9.6h11M2 11.6h11M2 13.6h11" stroke="#c47c40" stroke-width=".6"/></svg><span style="letter-spacing:0.37px">alt.politics</span></div>
<div class="si" style="top:304px"><svg class="crate" width="15" height="16" viewBox="0 0 15 16"><path d="M1 3.5 L2.5 3 V7 H1Z M12.5 3 L14 3.5 V7 H12.5Z" fill="#b87038"/><rect x="2.5" y="3.5" width="10" height="3.5" fill="#4a3a30"/><path d="M2 2 L7 .5 L10 2 L9 5 L2.5 5.5Z" fill="#f4f4f4" stroke="#888" stroke-width=".4"/><path d="M5 2.6 L11 2.3 L13 4.2 L11.5 5.5 L4.5 5.5Z" fill="#fafafa" stroke="#999" stroke-width=".4"/><rect x="2.8" y="4.6" width="9.4" height="2.6" fill="#8cc4ec"/><rect x="1" y="7" width="13" height="8.5" fill="#eca060" stroke="#b06a30" stroke-width=".7"/><path d="M2 9.6h11M2 11.6h11M2 13.6h11" stroke="#c47c40" stroke-width=".6"/></svg><span style="letter-spacing:0.22px">a.s.s.manchester.united</span></div>
<div class="si" style="top:324px"><svg class="crate" width="15" height="16" viewBox="0 0 15 16"><path d="M1 3.5 L2.5 3 V7 H1Z M12.5 3 L14 3.5 V7 H12.5Z" fill="#b87038"/><rect x="2.5" y="3.5" width="10" height="3.5" fill="#4a3a30"/><path d="M2 2 L7 .5 L10 2 L9 5 L2.5 5.5Z" fill="#f4f4f4" stroke="#888" stroke-width=".4"/><path d="M5 2.6 L11 2.3 L13 4.2 L11.5 5.5 L4.5 5.5Z" fill="#fafafa" stroke="#999" stroke-width=".4"/><rect x="2.8" y="4.6" width="9.4" height="2.6" fill="#8cc4ec"/><rect x="1" y="7" width="13" height="8.5" fill="#eca060" stroke="#b06a30" stroke-width=".7"/><path d="M2 9.6h11M2 11.6h11M2 13.6h11" stroke="#c47c40" stroke-width=".6"/></svg><span style="letter-spacing:0.19px">rec.travel.europe</span></div>
<div class="a" style="left:0;top:542px;width:183px;height:44px;background:linear-gradient(#e4e6ea,#c9cbcf);border-top:1px solid #fafafa;border-bottom:1px solid #a8aaae">
<svg class="a" style="left:9px;top:7px" width="30" height="30" viewBox="0 0 30 30"><defs><radialGradient id="lens" cx=".45" cy=".4" r=".6"><stop offset="0" stop-color="#f4fbff"/><stop offset="1" stop-color="#b8dcee"/></radialGradient></defs><path d="M16.5 16.5 L27 27" stroke="#222" stroke-width="5" stroke-linecap="round"/><path d="M15 15 L18 18" stroke="#777" stroke-width="3"/><circle cx="9.7" cy="9.7" r="7.4" fill="url(#lens)" stroke="#6a6e74" stroke-width="2.2"/><circle cx="9.7" cy="9.7" r="8.6" fill="none" stroke="#b8bcc0" stroke-width=".6"/></svg>
<div class="a" style="left:48px;top:15px;font-size:11px;font-weight:bold;letter-spacing:-.3px;color:#3e4450;text-shadow:0 1px 0 rgba(255,255,255,.7)">SEARCH</div></div>
<div class="a" style="left:0;top:586px;width:183px;height:43px;background:linear-gradient(#e4e6ea,#c9cbcf);border-top:1px solid #fafafa;border-bottom:1px solid #a8aaae">
<svg class="a" style="left:8px;top:6px" width="31" height="31" viewBox="0 0 31 31"><defs><linearGradient id="sg" x1="0" y1="0" x2="0" y2="1"><stop offset="0" stop-color="#ffe860"/><stop offset="1" stop-color="#f0c010"/></linearGradient></defs><path d="M15.6 1.2 Q16.3 1.2 17 1.9 L28.6 13.5 Q29.8 14.7 28.6 15.9 L17 27.5 Q15.6 28.9 14.2 27.5 L2.6 15.9 Q1.4 14.7 2.6 13.5 L14.2 1.9 Q14.9 1.2 15.6 1.2Z" fill="url(#sg)" stroke="#7a6a30" stroke-width="1.1"/><path d="M10.5 8 L16 13.5 H12.3 V22 H8.7 V13.5 H5Z" fill="#1a1a1a"/><path d="M16.5 8 H20.1 V16.5 H23.8 L18.3 22.5 L12.8 16.5 H16.5Z" fill="#1a1a1a"/></svg>
<div class="a" style="left:48px;top:15px;font-size:11px;font-weight:bold;letter-spacing:-.3px;color:#3e4450;text-shadow:0 1px 0 rgba(255,255,255,.7)">TRANSFERS</div></div>
<div class="a" style="left:0;top:629px;width:183px;height:62px;background:#575f72;border-top:1px solid #474e5e">
<div class="a" style="left:10px;top:7px;font-size:11px;font-weight:bold;color:#eef1f5;text-shadow:0 -1px 0 rgba(0,0,0,.3)">Downloading 3 files</div>
<div class="a" style="left:10px;top:26px;width:140px;height:10px;border-radius:5px;background:linear-gradient(#2c3444,#3c4658);box-shadow:inset 0 1px 1px rgba(0,0,0,.4)"></div>
<div class="a" style="left:10px;top:26px;width:51px;height:10px;border-radius:5px;background:linear-gradient(#ffffff,#e8e8e8 50%,#cfcfcf)"></div>
<div class="a" style="left:158px;top:23px;width:15px;height:15px;border-radius:50%;background:#eaeaea"><div class="a" style="left:4px;top:3.5px;width:2.5px;height:8px;background:#575f72"></div><div class="a" style="left:8.5px;top:3.5px;width:2.5px;height:8px;background:#575f72"></div></div>
<div class="a" style="left:10px;top:44.5px;font-size:9.5px;letter-spacing:.15px;color:#d4dae4;white-space:nowrap">13.1 MB of 41.3 MB – about 30 sec…</div>
</div>
</div>
<div id="main">
<div class="hdr"><div class="hdiv" style="left:64px"></div><span style="left:69px">Name</span><div class="hdiv" style="left:550px"></div><span style="left:555px">From</span><div class="hdiv" style="left:630px"></div><span style="left:635px">Date</span><div class="a" style="left:699px;top:6px;width:0;height:0;border-top:7px solid #8a8a8a;border-left:4px solid transparent;border-right:4px solid transparent"></div><div class="hdiv" style="left:710px"></div><span style="right:3px">Size</span></div>
<div class="a" style="left:790px;top:0;width:15px;height:19px;background:linear-gradient(#ffffff,#ececec);border-bottom:1px solid #b8b8b8;border-left:1px solid #c8c8c8"></div>
<div class="a" style="left:0;top:19px;width:790px;height:8px;background:#fff;overflow:hidden"><div class="a" style="left:35px;top:-30px;width:24px;height:32px;border:1px solid #8a8a8a;background:#fafafa"></div><div class="a" style="left:72px;top:-15px;width:46px;height:17px;border-radius:9px;border:1px solid #b4b4b4;background:linear-gradient(#f6f6f6,#dcdcdc)"></div></div>
<div class="row" style="top:27px;background:#eef3fc"><div class="tri"></div><div class="dot"></div><svg class="mp3" width="25" height="32" viewBox="0 0 25 32"><path d="M.7 .5 H14.8 L23.5 8.7 V30.5 H.7Z" fill="#fbfbfb" stroke="#7e7e7e" stroke-width="1"/><path d="M14.8 .5 V8.7 H23.5Z" fill="#ffffff" stroke="#9a9a9a" stroke-width=".6"/><path d="M2 2 H14 V9 H22 V12 H2Z" fill="#e8e8e8" opacity=".5"/><circle cx="11.8" cy="15.1" r="6.4" fill="#d8e2ea" stroke="#b8c4cc" stroke-width=".5"/><path d="M7 12 Q9 9 11 12" stroke="#f0c060" stroke-width="1" fill="none" opacity=".6"/><path d="M10.4 19.5 V10.2 L16 9.3 V18" stroke="#1a6ad8" stroke-width="1.7" fill="none"/><ellipse cx="9" cy="19.6" rx="2" ry="1.6" fill="#1a6ad8"/><ellipse cx="14.6" cy="18.2" rx="2" ry="1.6" fill="#1a6ad8"/><text x="12.2" y="29.1" font-size="6.8" font-family="Liberation Sans" text-anchor="middle" fill="#5a5a5a" letter-spacing=".9">MP3</text></svg><div class="ttl" style="letter-spacing:0.19px">Imagination Theater 2006 [~ of 34] "imag 2006-" yEnc</div><div class="pill" style="width:46px"><svg class="a" style="left:8px;top:3px" width="11" height="10" viewBox="0 0 11 10"><path d="M3 8.5 V1 H9.5 V7" stroke="#333" stroke-width="1.6" fill="none"/><ellipse cx="2.4" cy="8.2" rx="2.1" ry="1.6" fill="#333"/><ellipse cx="8.4" cy="7.2" rx="2.1" ry="1.6" fill="#333"/></svg><b style="left:23px">34</b></div><div class="cnt" style="left:126px">34 files</div><div class="col" style="left:555px;letter-spacing:.05px">Richard La…</div><div class="col" style="left:635px;letter-spacing:1.2px">8/22/09</div><div class="sz">752.6 MB</div><div class="dl"><svg class="a" style="left:3px;top:3px" width="10" height="10" viewBox="0 0 10 10"><path d="M3.3 .8 H6.7 V4.6 H9.3 L5 9.4 L.7 4.6 H3.3Z" fill="#fff"/></svg></div></div>
<div class="row" style="top:70px;background:#ffffff"><div class="tri"></div><div class="dot"></div><svg class="mp3" width="25" height="32" viewBox="0 0 25 32"><path d="M.7 .5 H14.8 L23.5 8.7 V30.5 H.7Z" fill="#fbfbfb" stroke="#7e7e7e" stroke-width="1"/><path d="M14.8 .5 V8.7 H23.5Z" fill="#ffffff" stroke="#9a9a9a" stroke-width=".6"/><path d="M2 2 H14 V9 H22 V12 H2Z" fill="#e8e8e8" opacity=".5"/><circle cx="11.8" cy="15.1" r="6.4" fill="#d8e2ea" stroke="#b8c4cc" stroke-width=".5"/><path d="M7 12 Q9 9 11 12" stroke="#f0c060" stroke-width="1" fill="none" opacity=".6"/><path d="M10.4 19.5 V10.2 L16 9.3 V18" stroke="#1a6ad8" stroke-width="1.7" fill="none"/><ellipse cx="9" cy="19.6" rx="2" ry="1.6" fill="#1a6ad8"/><ellipse cx="14.6" cy="18.2" rx="2" ry="1.6" fill="#1a6ad8"/><text x="12.2" y="29.1" font-size="6.8" font-family="Liberation Sans" text-anchor="middle" fill="#5a5a5a" letter-spacing=".9">MP3</text></svg><div class="ttl" style="letter-spacing:-0.5px">SHADOW –</div><div class="pill" style="width:40px"><svg class="a" style="left:8px;top:3px" width="11" height="10" viewBox="0 0 11 10"><path d="M3 8.5 V1 H9.5 V7" stroke="#333" stroke-width="1.6" fill="none"/><ellipse cx="2.4" cy="8.2" rx="2.1" ry="1.6" fill="#333"/><ellipse cx="8.4" cy="7.2" rx="2.1" ry="1.6" fill="#333"/></svg><b style="left:23px">4</b></div><div class="cnt" style="left:120px">4 files</div><div class="col" style="left:555px;letter-spacing:.05px">dbf</div><div class="col" style="left:635px;letter-spacing:1.2px">8/13/09</div><div class="sz">139.8 MB</div><div class="dl"><svg class="a" style="left:3px;top:3px" width="10" height="10" viewBox="0 0 10 10"><path d="M3.3 .8 H6.7 V4.6 H9.3 L5 9.4 L.7 4.6 H3.3Z" fill="#fff"/></svg></div></div>
<div class="row" style="top:113px;background:#eef3fc"><div class="tri"></div><div class="dot"></div><svg class="mp3" width="25" height="32" viewBox="0 0 25 32"><path d="M.7 .5 H14.8 L23.5 8.7 V30.5 H.7Z" fill="#fbfbfb" stroke="#7e7e7e" stroke-width="1"/><path d="M14.8 .5 V8.7 H23.5Z" fill="#ffffff" stroke="#9a9a9a" stroke-width=".6"/><path d="M2 2 H14 V9 H22 V12 H2Z" fill="#e8e8e8" opacity=".5"/><circle cx="11.8" cy="15.1" r="6.4" fill="#d8e2ea" stroke="#b8c4cc" stroke-width=".5"/><path d="M7 12 Q9 9 11 12" stroke="#f0c060" stroke-width="1" fill="none" opacity=".6"/><path d="M10.4 19.5 V10.2 L16 9.3 V18" stroke="#1a6ad8" stroke-width="1.7" fill="none"/><ellipse cx="9" cy="19.6" rx="2" ry="1.6" fill="#1a6ad8"/><ellipse cx="14.6" cy="18.2" rx="2" ry="1.6" fill="#1a6ad8"/><text x="12.2" y="29.1" font-size="6.8" font-family="Liberation Sans" text-anchor="middle" fill="#5a5a5a" letter-spacing=".9">MP3</text></svg><div class="ttl" style="letter-spacing:-0.23px">More Baseball Broadcasts – "Baseball – " yEnc</div><div class="pill" style="width:40px"><svg class="a" style="left:8px;top:3px" width="11" height="10" viewBox="0 0 11 10"><path d="M3 8.5 V1 H9.5 V7" stroke="#333" stroke-width="1.6" fill="none"/><ellipse cx="2.4" cy="8.2" rx="2.1" ry="1.6" fill="#333"/><ellipse cx="8.4" cy="7.2" rx="2.1" ry="1.6" fill="#333"/></svg><b style="left:23px">6</b></div><div class="cnt" style="left:120px">6 files</div><div class="col" style="left:555px;letter-spacing:.05px">Raoul F.</div><div class="col" style="left:635px;letter-spacing:1.2px">8/11/09</div><div class="sz">383.6 MB</div><div class="dl"><svg class="a" style="left:3px;top:3px" width="10" height="10" viewBox="0 0 10 10"><path d="M3.3 .8 H6.7 V4.6 H9.3 L5 9.4 L.7 4.6 H3.3Z" fill="#fff"/></svg></div></div>
<div class="row" style="top:156px;background:#ffffff"><div class="tri"></div><div class="dot"></div><svg class="mp3" width="25" height="32" viewBox="0 0 25 32"><path d="M.7 .5 H14.8 L23.5 8.7 V30.5 H.7Z" fill="#fbfbfb" stroke="#7e7e7e" stroke-width="1"/><path d="M14.8 .5 V8.7 H23.5Z" fill="#ffffff" stroke="#9a9a9a" stroke-width=".6"/><path d="M2 2 H14 V9 H22 V12 H2Z" fill="#e8e8e8" opacity=".5"/><circle cx="11.8" cy="15.1" r="6.4" fill="#d8e2ea" stroke="#b8c4cc" stroke-width=".5"/><path d="M7 12 Q9 9 11 12" stroke="#f0c060" stroke-width="1" fill="none" opacity=".6"/><path d="M10.4 19.5 V10.2 L16 9.3 V18" stroke="#1a6ad8" stroke-width="1.7" fill="none"/><ellipse cx="9" cy="19.6" rx="2" ry="1.6" fill="#1a6ad8"/><ellipse cx="14.6" cy="18.2" rx="2" ry="1.6" fill="#1a6ad8"/><text x="12.2" y="29.1" font-size="6.8" font-family="Liberation Sans" text-anchor="middle" fill="#5a5a5a" letter-spacing=".9">MP3</text></svg><div class="ttl" style="letter-spacing:-0.14px">Baseball Broadcasts "Baseball –" yEnc ~/8</div><div class="pill" style="width:40px"><svg class="a" style="left:8px;top:3px" width="11" height="10" viewBox="0 0 11 10"><path d="M3 8.5 V1 H9.5 V7" stroke="#333" stroke-width="1.6" fill="none"/><ellipse cx="2.4" cy="8.2" rx="2.1" ry="1.6" fill="#333"/><ellipse cx="8.4" cy="7.2" rx="2.1" ry="1.6" fill="#333"/></svg><b style="left:23px">8</b></div><div class="cnt" style="left:120px">8 files</div><div class="col" style="left:555px;letter-spacing:.05px">Raoul F.</div><div class="col" style="left:635px;letter-spacing:1.2px">8/10/09</div><div class="sz">371.5 MB</div><div class="dl"><svg class="a" style="left:3px;top:3px" width="10" height="10" viewBox="0 0 10 10"><path d="M3.3 .8 H6.7 V4.6 H9.3 L5 9.4 L.7 4.6 H3.3Z" fill="#fff"/></svg></div></div>
<div class="row" style="top:199px;background:#eef3fc"><div class="tri"></div><div class="dot"></div><svg class="mp3" width="25" height="32" viewBox="0 0 25 32"><path d="M.7 .5 H14.8 L23.5 8.7 V30.5 H.7Z" fill="#fbfbfb" stroke="#7e7e7e" stroke-width="1"/><path d="M14.8 .5 V8.7 H23.5Z" fill="#ffffff" stroke="#9a9a9a" stroke-width=".6"/><path d="M2 2 H14 V9 H22 V12 H2Z" fill="#e8e8e8" opacity=".5"/><circle cx="11.8" cy="15.1" r="6.4" fill="#d8e2ea" stroke="#b8c4cc" stroke-width=".5"/><path d="M7 12 Q9 9 11 12" stroke="#f0c060" stroke-width="1" fill="none" opacity=".6"/><path d="M10.4 19.5 V10.2 L16 9.3 V18" stroke="#1a6ad8" stroke-width="1.7" fill="none"/><ellipse cx="9" cy="19.6" rx="2" ry="1.6" fill="#1a6ad8"/><ellipse cx="14.6" cy="18.2" rx="2" ry="1.6" fill="#1a6ad8"/><text x="12.2" y="29.1" font-size="6.8" font-family="Liberation Sans" text-anchor="middle" fill="#5a5a5a" letter-spacing=".9">MP3</text></svg><div class="ttl" style="letter-spacing:-0.06px">Fibber fills from archive.org – "&nbsp; ~ MBytes yEnc</div><div class="pill" style="width:40px"><svg class="a" style="left:8px;top:3px" width="11" height="10" viewBox="0 0 11 10"><path d="M3 8.5 V1 H9.5 V7" stroke="#333" stroke-width="1.6" fill="none"/><ellipse cx="2.4" cy="8.2" rx="2.1" ry="1.6" fill="#333"/><ellipse cx="8.4" cy="7.2" rx="2.1" ry="1.6" fill="#333"/></svg><b style="left:23px">5</b></div><div class="cnt" style="left:120px">5 files</div><div class="col" style="left:555px;letter-spacing:.05px">PickThank</div><div class="col" style="left:635px;letter-spacing:1.2px">8/9/09</div><div class="sz">49.1 MB</div><div class="dl"><svg class="a" style="left:3px;top:3px" width="10" height="10" viewBox="0 0 10 10"><path d="M3.3 .8 H6.7 V4.6 H9.3 L5 9.4 L.7 4.6 H3.3Z" fill="#fff"/></svg></div></div>
<div class="row" style="top:242px;background:#ffffff"><div class="tri"></div><div class="dot"></div><svg class="mp3" width="25" height="32" viewBox="0 0 25 32"><path d="M.7 .5 H14.8 L23.5 8.7 V30.5 H.7Z" fill="#fbfbfb" stroke="#7e7e7e" stroke-width="1"/><path d="M14.8 .5 V8.7 H23.5Z" fill="#ffffff" stroke="#9a9a9a" stroke-width=".6"/><path d="M2 2 H14 V9 H22 V12 H2Z" fill="#e8e8e8" opacity=".5"/><circle cx="11.8" cy="15.1" r="6.4" fill="#d8e2ea" stroke="#b8c4cc" stroke-width=".5"/><path d="M7 12 Q9 9 11 12" stroke="#f0c060" stroke-width="1" fill="none" opacity=".6"/><path d="M10.4 19.5 V10.2 L16 9.3 V18" stroke="#1a6ad8" stroke-width="1.7" fill="none"/><ellipse cx="9" cy="19.6" rx="2" ry="1.6" fill="#1a6ad8"/><ellipse cx="14.6" cy="18.2" rx="2" ry="1.6" fill="#1a6ad8"/><text x="12.2" y="29.1" font-size="6.8" font-family="Liberation Sans" text-anchor="middle" fill="#5a5a5a" letter-spacing=".9">MP3</text></svg><div class="ttl" style="letter-spacing:-0.13px">Posting McGee, They Called Me! – yEnc " ~ bytes</div><div class="pill" style="width:52px"><svg class="a" style="left:8px;top:3px" width="11" height="10" viewBox="0 0 11 10"><path d="M3 8.5 V1 H9.5 V7" stroke="#333" stroke-width="1.6" fill="none"/><ellipse cx="2.4" cy="8.2" rx="2.1" ry="1.6" fill="#333"/><ellipse cx="8.4" cy="7.2" rx="2.1" ry="1.6" fill="#333"/></svg><b style="left:23px">570</b></div><div class="cnt" style="left:132px">577 files</div><div class="col" style="left:555px;letter-spacing:.05px">ykw</div><div class="col" style="left:635px;letter-spacing:1.2px">8/9/09</div><div class="sz">4.46 GB</div><div class="dl"><svg class="a" style="left:3px;top:3px" width="10" height="10" viewBox="0 0 10 10"><path d="M3.3 .8 H6.7 V4.6 H9.3 L5 9.4 L.7 4.6 H3.3Z" fill="#fff"/></svg></div></div>
<div class="row" style="top:285px;background:linear-gradient(#d8e4f6,#d3e2f2 90%,#e0eaf8)"><div class="a" style="left:4px;top:18px;width:0;height:0;border-top:7px solid #8a8a8a;border-left:4px solid transparent;border-right:4px solid transparent"></div><div class="dot"></div><svg class="mp3" width="25" height="32" viewBox="0 0 25 32"><path d="M.7 .5 H14.8 L23.5 8.7 V30.5 H.7Z" fill="#fbfbfb" stroke="#7e7e7e" stroke-width="1"/><path d="M14.8 .5 V8.7 H23.5Z" fill="#ffffff" stroke="#9a9a9a" stroke-width=".6"/><path d="M2 2 H14 V9 H22 V12 H2Z" fill="#e8e8e8" opacity=".5"/><circle cx="11.8" cy="15.1" r="6.4" fill="#d8e2ea" stroke="#b8c4cc" stroke-width=".5"/><path d="M7 12 Q9 9 11 12" stroke="#f0c060" stroke-width="1" fill="none" opacity=".6"/><path d="M10.4 19.5 V10.2 L16 9.3 V18" stroke="#1a6ad8" stroke-width="1.7" fill="none"/><ellipse cx="9" cy="19.6" rx="2" ry="1.6" fill="#1a6ad8"/><ellipse cx="14.6" cy="18.2" rx="2" ry="1.6" fill="#1a6ad8"/><text x="12.2" y="29.1" font-size="6.8" font-family="Liberation Sans" text-anchor="middle" fill="#5a5a5a" letter-spacing=".9">MP3</text></svg><div class="ttl">(For Anybody – The Six Shooter [~/41] – " yEnc</div>
<div class="pill" style="width:114px;overflow:hidden"><div class="a" style="left:0;top:0;width:42px;height:15px;background:linear-gradient(#d0d0d0,#bcbcbc)"><svg class="a" style="left:8px;top:3px" width="11" height="10" viewBox="0 0 11 10"><path d="M3 8.5 V1 H9.5 V7" stroke="#333" stroke-width="1.6" fill="none"/><ellipse cx="2.4" cy="8.2" rx="2.1" ry="1.6" fill="#333"/><ellipse cx="8.4" cy="7.2" rx="2.1" ry="1.6" fill="#333"/></svg><b style="left:23px;top:1px">40</b></div><div class="a" style="left:42px;top:0;width:1px;height:15px;background:#a8a8a8"></div><div class="a" style="left:43px;top:0;width:33px;height:15px;background:linear-gradient(#d0d0d0,#bcbcbc)"><svg class="a" style="left:7px;top:3px" width="11" height="10" viewBox="0 0 11 10"><rect x="0" y="2" width="11" height="8" rx="1" fill="#333"/><rect x="3" y="0.5" width="5" height="2.5" fill="#333"/><circle cx="5.5" cy="6" r="2.3" fill="#ddd"/></svg><b style="left:21px;top:1px">1</b></div><div class="a" style="left:76px;top:0;width:1px;height:15px;background:#a8a8a8"></div><div class="a" style="left:77px;top:0;width:37px;height:15px"><svg class="a" style="left:7px;top:3px" width="11" height="10" viewBox="0 0 11 10"><ellipse cx="5.5" cy="4.3" rx="5.2" ry="4" fill="#333"/><path d="M2 7 L1 10 L5 7.5Z" fill="#333"/></svg><b style="left:21px;top:1px">4</b></div></div>
<div class="a" style="left:86px;top:39px;width:0;height:0;border-bottom:4px solid #333;border-left:5px solid transparent;border-right:5px solid transparent"></div>
<div class="a" style="left:123px;top:39px;width:0;height:0;border-bottom:4px solid #333;border-left:5px solid transparent;border-right:5px solid transparent"></div>
<div class="cnt" style="left:193px">41 files, 4 messages</div><div class="col" style="left:555px">euphy</div><div class="col" style="left:635px;letter-spacing:1.2px">6/22/09</div><div class="sz">541.8 MB</div><div class="dl"><svg class="a" style="left:3px;top:3px" width="10" height="10" viewBox="0 0 10 10"><path d="M3.3 .8 H6.7 V4.6 H9.3 L5 9.4 L.7 4.6 H3.3Z" fill="#fff"/></svg></div></div>
<div class="a" style="left:15px;top:343px;width:131px;height:129px;background:#f0f0f0;box-shadow:0 1px 3px rgba(0,0,0,.6);padding:1px 2px 2px 2px">
<svg width="127" height="126" viewBox="0 0 127 126" style="display:block">
<defs><linearGradient id="wall" x1="0" y1="0" x2="1" y2="1"><stop offset="0" stop-color="#c4bcaa"/><stop offset=".5" stop-color="#a89e88"/><stop offset="1" stop-color="#6a6050"/></linearGradient>
<linearGradient id="sky" x1="0" y1="0" x2="0" y2="1"><stop offset="0" stop-color="#7aa0d0"/><stop offset=".45" stop-color="#b0c8e4"/><stop offset="1" stop-color="#dce6f0"/></linearGradient>
<linearGradient id="jk" x1="0" y1="0" x2="1" y2="1"><stop offset="0" stop-color="#9a8050"/><stop offset=".5" stop-color="#7e6438"/><stop offset="1" stop-color="#5e4628"/></linearGradient></defs>
<rect width="127" height="126" fill="url(#wall)"/>
<path d="M62 0 H127 V126 H104 L88 60 Q80 30 66 10Z" fill="url(#sky)"/>
<ellipse cx="110" cy="40" rx="14" ry="9" fill="#eef2f6" opacity=".7"/>
<ellipse cx="78" cy="8" rx="8" ry="5" fill="#e8eef4" opacity=".6"/>
<path d="M20 30 Q30 50 28 80 Q30 100 45 126 H30 Q18 100 22 70Z" fill="#8a8070" opacity=".35"/>
<path d="M55 40 Q60 70 58 126 H48 Q52 80 50 40Z" fill="#6a6050" opacity=".35"/>
<path d="M5 8 L32 24 L36 17 L10 3 Z" fill="#3a3a38"/>
<path d="M20 20 Q28 14 37 21 L42 38 Q34 45 25 37 Z" fill="#7a6030"/>
<path d="M28 34 Q45 28 72 27 L102 24 Q118 30 124 62 L127 88 L113 84 L106 62 L102 96 L70 94 Q55 72 38 48 Z" fill="url(#jk)"/>
<path d="M36 40 Q50 52 62 80 L70 94 L54 97 Q44 72 33 50Z" fill="#4a3820"/>
<path d="M87 40 L105 37 L107 80 L84 82 Z" fill="#8aa0b8"/>
<path d="M87 25 L105 24 L103 42 L91 42 Z" fill="#a83028"/>
<ellipse cx="93" cy="9" rx="19" ry="5" fill="#c4b48c"/>
<path d="M83 9 Q93 -1 103 9 Z" fill="#b4a47c"/>
<path d="M85 12 H101 L100 30 Q93 35 86 28 Z" fill="#b47050"/>
<rect x="80" y="80" width="28" height="6" fill="#3a2818"/>
<path d="M75 86 H113 L117 126 H99 L95 102 L89 126 H71 Z" fill="#283870"/>
<text x="11" y="11" font-family="Liberation Serif" font-weight="bold" font-size="8" fill="#111">The</text>
<text x="28" y="14" font-family="Liberation Serif" font-weight="bold" font-style="italic" font-size="11" fill="#111" transform="rotate(-6 28 14)">SIX</text>
<text x="33" y="28" font-family="Liberation Sans" font-weight="bold" font-style="italic" font-size="10.5" fill="#0a0a0a" letter-spacing="-.4">SHOOTER</text>
<text x="8" y="56" font-family="Liberation Serif" font-weight="bold" font-size="5" fill="#333">starring</text>
<text x="8" y="66" font-family="Liberation Serif" font-weight="bold" font-size="6.5" fill="#1a1a1a">JAMES</text>
<text x="8" y="77" font-family="Liberation Serif" font-weight="bold" font-size="6" fill="#1a1a1a">STEWART</text>
<text x="21" y="87" font-family="Liberation Serif" font-weight="bold" font-size="6" fill="#1a1a1a">as</text>
<text x="8" y="98" font-family="Liberation Sans" font-weight="bold" font-size="10" fill="#111">Britt</text>
<text x="7" y="109" font-family="Liberation Sans" font-weight="bold" font-size="10" fill="#111">Ponset</text>
<text x="8" y="117" font-family="Liberation Sans" font-weight="bold" font-size="5" fill="#e8e030">OLDTIME RADIO MP3</text>
<path d="M80 92h26M82 96h24M80 100h26M81 104h25M80 108h22M82 112h22" stroke="#d8d040" stroke-width=".8" stroke-dasharray="2 1" opacity=".75"/>
</svg></div>
<div class="a" style="left:55px;top:475px;font-size:11px;font-weight:bold;color:#f0f0f0">folder.jpg</div>
<div class="frow" style="top:503px;background:linear-gradient(#5b5b5b,#575757);"><div class="gdot"></div><svg class="a" style="left:41px;top:3px" width="11" height="15" viewBox="0 0 11 15"><path d="M.5 .5 H7.5 L10.5 3.5 V14.5 H.5Z" fill="#fafafa" stroke="#222"/><path d="M4 11.5 V5 L8.5 4 V10" stroke="#1a70d0" stroke-width="1.3" fill="none"/><circle cx="3.2" cy="11.5" r="1.5" fill="#1a70d0"/><circle cx="7.7" cy="10.2" r="1.5" fill="#1a70d0"/></svg><div class="t" style="letter-spacing:0.23px">540624 (39) – MyraBarker.mp3</div><div class="play"><svg class="a" style="left:7.5px;top:2.8px" width="8" height="9" viewBox="0 0 8 9"><path d="M0 .5 L7 4.5 L0 8.5Z" fill="#383838"/></svg></div><div class="c" style="left:555px">euphy</div><div class="c" style="left:635px;letter-spacing:1.2px">6/22/09</div><div class="s">13.7 MB</div><div class="a" style="left:773px;top:4.5px;width:12px;height:12px;border-radius:50%;background:#2a2a2a"><svg class="a" style="left:1.5px;top:1.5px" width="9" height="9" viewBox="0 0 9 9"><path d="M4.5 .8 V6.5 M1.5 3.8 L4.5 7.2 L7.5 3.8" stroke="#fff" stroke-width="2.2" fill="none"/></svg></div></div>
<div class="frow" style="top:524px;background:linear-gradient(#4aa2ea,#3a8ad8);border-bottom:1px solid #3a4252;"><svg class="a" style="left:18.5px;top:5px" width="10" height="11" viewBox="0 0 10 11"><path d="M5 1 V7 M1.5 4.8 L5 8.8 L8.5 4.8" stroke="#fff" stroke-width="2.4" fill="none"/></svg><svg class="a" style="left:4px;top:5px" width="8" height="11" viewBox="0 0 8 11"><path d="M0 0 H8 V1.5 L4.8 5.5 L8 9.5 V11 H0 V9.5 L3.2 5.5 L0 1.5Z" fill="#fff"/></svg><svg class="a" style="left:41px;top:3px" width="11" height="15" viewBox="0 0 11 15"><path d="M.5 .5 H7.5 L10.5 3.5 V14.5 H.5Z" fill="#fafafa" stroke="#222"/><path d="M4 11.5 V5 L8.5 4 V10" stroke="#1a70d0" stroke-width="1.3" fill="none"/><circle cx="3.2" cy="11.5" r="1.5" fill="#1a70d0"/><circle cx="7.7" cy="10.2" r="1.5" fill="#1a70d0"/></svg><div class="t" style="letter-spacing:0.15px">540617 (38) – WhenTheShoeDoesn'tFit.mp3</div><div class="a" style="left:423px;top:6.5px;width:100px;height:8.5px;border:1px solid #1a1a1a;background:#9c9c9c;border-radius:1px"></div><div class="a" style="left:424px;top:7.5px;width:19px;height:6.5px;background:linear-gradient(#7aa4e0,#3a64b0)"></div><div class="a" style="left:439px;top:6.5px;width:7px;height:7px;transform:rotate(45deg);border-radius:1.5px;background:linear-gradient(135deg,#f0f0f0,#b8b8b8);border:1px solid #777"></div><div class="play"><div class="a" style="left:7.5px;top:3.8px;width:6.5px;height:6.5px;background:#383838"></div></div><div class="c" style="left:555px">euphy</div><div class="c" style="left:635px;letter-spacing:1.2px">6/22/09</div><div class="s">13.7 MB</div><svg class="a" style="left:772px;top:3.5px" width="14" height="14" viewBox="0 0 14 14"><circle cx="7" cy="7" r="5.6" fill="none" stroke="#fff" stroke-width="1.6"/><path d="M7 7 L7 2 A5 5 0 0 1 10.54 10.54Z" fill="#fff"/></svg></div>
<div class="frow" style="top:545px;background:linear-gradient(#3a88dc,#2c72cc);border-bottom:1px solid #3a4252;"><div class="a" style="left:17px;top:4px;width:13px;height:13px;border-radius:50%;background:rgba(140,200,255,.35)"></div><svg class="a" style="left:18.5px;top:5px" width="10" height="11" viewBox="0 0 10 11"><path d="M5 1 V7 M1.5 4.8 L5 8.8 L8.5 4.8" stroke="#fff" stroke-width="2.4" fill="none"/></svg><svg class="a" style="left:41px;top:3px" width="11" height="15" viewBox="0 0 11 15"><path d="M.5 .5 H7.5 L10.5 3.5 V14.5 H.5Z" fill="#fafafa" stroke="#222"/><path d="M4 11.5 V5 L8.5 4 V10" stroke="#1a70d0" stroke-width="1.3" fill="none"/><circle cx="3.2" cy="11.5" r="1.5" fill="#1a70d0"/><circle cx="7.7" cy="10.2" r="1.5" fill="#1a70d0"/></svg><div class="t" style="letter-spacing:0.23px">540610 (37) – TheNewSheriff.mp3</div><div class="play"><svg class="a" style="left:7.5px;top:2.8px" width="8" height="9" viewBox="0 0 8 9"><path d="M0 .5 L7 4.5 L0 8.5Z" fill="#383838"/></svg></div><div class="c" style="left:555px">euphy</div><div class="c" style="left:635px;letter-spacing:1.2px">6/22/09</div><div class="s">13.7 MB</div><svg class="a" style="left:772px;top:3.5px" width="14" height="14" viewBox="0 0 14 14"><circle cx="7" cy="7" r="5.6" fill="none" stroke="#fff" stroke-width="1.6"/><path d="M7 7 L7 2 A5 5 0 0 1 10.54 10.54Z" fill="#fff"/></svg></div>
<div class="frow" style="top:566px;background:linear-gradient(#2a6ad6,#1e54c0);"><div class="a" style="left:17px;top:4px;width:13px;height:13px;border-radius:50%;background:rgba(140,200,255,.35)"></div><svg class="a" style="left:18.5px;top:5px" width="10" height="11" viewBox="0 0 10 11"><path d="M5 1 V7 M1.5 4.8 L5 8.8 L8.5 4.8" stroke="#fff" stroke-width="2.4" fill="none"/></svg><svg class="a" style="left:41px;top:3px" width="11" height="15" viewBox="0 0 11 15"><path d="M.5 .5 H7.5 L10.5 3.5 V14.5 H.5Z" fill="#fafafa" stroke="#222"/><path d="M4 11.5 V5 L8.5 4 V10" stroke="#1a70d0" stroke-width="1.3" fill="none"/><circle cx="3.2" cy="11.5" r="1.5" fill="#1a70d0"/><circle cx="7.7" cy="10.2" r="1.5" fill="#1a70d0"/></svg><div class="t" style="letter-spacing:0.2px">540603 (36) – SilverThreads.mp3</div><div class="play"><svg class="a" style="left:7.5px;top:2.8px" width="8" height="9" viewBox="0 0 8 9"><path d="M0 .5 L7 4.5 L0 8.5Z" fill="#383838"/></svg></div><div class="c" style="left:555px">euphy</div><div class="c" style="left:635px;letter-spacing:1.2px">6/22/09</div><div class="s">13.9 MB</div><svg class="a" style="left:772px;top:3.5px" width="14" height="14" viewBox="0 0 14 14"><circle cx="7" cy="7" r="5.6" fill="none" stroke="#fff" stroke-width="1.6"/><path d="M7 7 L7 2 A5 5 0 0 1 12.00 7.00Z" fill="#fff"/></svg></div>
<div class="frow" style="top:587px;background:linear-gradient(#5b5b5b,#575757);"><div class="gdot"></div><svg class="a" style="left:41px;top:3px" width="11" height="15" viewBox="0 0 11 15"><path d="M.5 .5 H7.5 L10.5 3.5 V14.5 H.5Z" fill="#fafafa" stroke="#222"/><path d="M4 11.5 V5 L8.5 4 V10" stroke="#1a70d0" stroke-width="1.3" fill="none"/><circle cx="3.2" cy="11.5" r="1.5" fill="#1a70d0"/><circle cx="7.7" cy="10.2" r="1.5" fill="#1a70d0"/></svg><div class="t" style="letter-spacing:0.21px">540527 (35) – BloodRelations.mp3</div><div class="play"><svg class="a" style="left:7.5px;top:2.8px" width="8" height="9" viewBox="0 0 8 9"><path d="M0 .5 L7 4.5 L0 8.5Z" fill="#383838"/></svg></div><div class="c" style="left:555px">euphy</div><div class="c" style="left:635px;letter-spacing:1.2px">6/22/09</div><div class="s">13.9 MB</div><div class="a" style="left:773px;top:4.5px;width:12px;height:12px;border-radius:50%;background:#2a2a2a"><svg class="a" style="left:1.5px;top:1.5px" width="9" height="9" viewBox="0 0 9 9"><path d="M4.5 .8 V6.5 M1.5 3.8 L4.5 7.2 L7.5 3.8" stroke="#fff" stroke-width="2.2" fill="none"/></svg></div></div>
<div class="frow" style="top:608px;background:linear-gradient(#515151,#4e4e4e);"><div class="gdot"></div><svg class="a" style="left:41px;top:3px" width="11" height="15" viewBox="0 0 11 15"><path d="M.5 .5 H7.5 L10.5 3.5 V14.5 H.5Z" fill="#fafafa" stroke="#222"/><path d="M4 11.5 V5 L8.5 4 V10" stroke="#1a70d0" stroke-width="1.3" fill="none"/><circle cx="3.2" cy="11.5" r="1.5" fill="#1a70d0"/><circle cx="7.7" cy="10.2" r="1.5" fill="#1a70d0"/></svg><div class="t" style="letter-spacing:0.23px">540520 (34) – TheShootingOfWyattKing.mp3</div><div class="play"><svg class="a" style="left:7.5px;top:2.8px" width="8" height="9" viewBox="0 0 8 9"><path d="M0 .5 L7 4.5 L0 8.5Z" fill="#383838"/></svg></div><div class="c" style="left:555px">euphy</div><div class="c" style="left:635px;letter-spacing:1.2px">6/22/09</div><div class="s">14.0 MB</div><div class="a" style="left:773px;top:4.5px;width:12px;height:12px;border-radius:50%;background:#2a2a2a"><svg class="a" style="left:1.5px;top:1.5px" width="9" height="9" viewBox="0 0 9 9"><path d="M4.5 .8 V6.5 M1.5 3.8 L4.5 7.2 L7.5 3.8" stroke="#fff" stroke-width="2.2" fill="none"/></svg></div></div>
<div class="frow" style="top:629px;background:linear-gradient(#5b5b5b,#575757);"><div class="gdot"></div><svg class="a" style="left:41px;top:3px" width="11" height="15" viewBox="0 0 11 15"><path d="M.5 .5 H7.5 L10.5 3.5 V14.5 H.5Z" fill="#fafafa" stroke="#222"/><path d="M4 11.5 V5 L8.5 4 V10" stroke="#1a70d0" stroke-width="1.3" fill="none"/><circle cx="3.2" cy="11.5" r="1.5" fill="#1a70d0"/><circle cx="7.7" cy="10.2" r="1.5" fill="#1a70d0"/></svg><div class="t" style="letter-spacing:0.16px">540513 (33) – TheDoubleSeven.mp3</div><div class="play"><svg class="a" style="left:7.5px;top:2.8px" width="8" height="9" viewBox="0 0 8 9"><path d="M0 .5 L7 4.5 L0 8.5Z" fill="#383838"/></svg></div><div class="c" style="left:555px">euphy</div><div class="c" style="left:635px;letter-spacing:1.2px">6/22/09</div><div class="s">14.1 MB</div><div class="a" style="left:773px;top:4.5px;width:12px;height:12px;border-radius:50%;background:#2a2a2a"><svg class="a" style="left:1.5px;top:1.5px" width="9" height="9" viewBox="0 0 9 9"><path d="M4.5 .8 V6.5 M1.5 3.8 L4.5 7.2 L7.5 3.8" stroke="#fff" stroke-width="2.2" fill="none"/></svg></div></div>
<div class="frow" style="top:650px;background:linear-gradient(#515151,#4e4e4e);"><div class="gdot"></div><svg class="a" style="left:41px;top:3px" width="11" height="15" viewBox="0 0 11 15"><path d="M.5 .5 H7.5 L10.5 3.5 V14.5 H.5Z" fill="#fafafa" stroke="#222"/><path d="M4 11.5 V5 L8.5 4 V10" stroke="#1a70d0" stroke-width="1.3" fill="none"/><circle cx="3.2" cy="11.5" r="1.5" fill="#1a70d0"/><circle cx="7.7" cy="10.2" r="1.5" fill="#1a70d0"/></svg><div class="t" style="letter-spacing:0.31px">540506 (32) – AnnaNorquest.mp3</div><div class="play"><svg class="a" style="left:7.5px;top:2.8px" width="8" height="9" viewBox="0 0 8 9"><path d="M0 .5 L7 4.5 L0 8.5Z" fill="#383838"/></svg></div><div class="c" style="left:555px">euphy</div><div class="c" style="left:635px;letter-spacing:1.2px">6/22/09</div><div class="s">14.0 MB</div><div class="a" style="left:773px;top:4.5px;width:12px;height:12px;border-radius:50%;background:#2a2a2a"><svg class="a" style="left:1.5px;top:1.5px" width="9" height="9" viewBox="0 0 9 9"><path d="M4.5 .8 V6.5 M1.5 3.8 L4.5 7.2 L7.5 3.8" stroke="#fff" stroke-width="2.2" fill="none"/></svg></div></div>
<div class="frow" style="top:671px;background:linear-gradient(#5b5b5b,#575757);"><div class="gdot"></div><svg class="a" style="left:41px;top:3px" width="11" height="15" viewBox="0 0 11 15"><path d="M.5 .5 H7.5 L10.5 3.5 V14.5 H.5Z" fill="#fafafa" stroke="#222"/><path d="M4 11.5 V5 L8.5 4 V10" stroke="#1a70d0" stroke-width="1.3" fill="none"/><circle cx="3.2" cy="11.5" r="1.5" fill="#1a70d0"/><circle cx="7.7" cy="10.2" r="1.5" fill="#1a70d0"/></svg><div class="t" style="letter-spacing:0.22px">540429 (31) – RevengeAtHarpersCreek.mp3</div><div class="play"><svg class="a" style="left:7.5px;top:2.8px" width="8" height="9" viewBox="0 0 8 9"><path d="M0 .5 L7 4.5 L0 8.5Z" fill="#383838"/></svg></div><div class="c" style="left:555px">euphy</div><div class="c" style="left:635px;letter-spacing:1.2px">6/22/09</div><div class="s">13.8 MB</div><div class="a" style="left:773px;top:4.5px;width:12px;height:12px;border-radius:50%;background:#2a2a2a"><svg class="a" style="left:1.5px;top:1.5px" width="9" height="9" viewBox="0 0 9 9"><path d="M4.5 .8 V6.5 M1.5 3.8 L4.5 7.2 L7.5 3.8" stroke="#fff" stroke-width="2.2" fill="none"/></svg></div></div>
<div class="a" style="left:790px;top:19px;width:15px;height:662px;background:linear-gradient(90deg,#e4e4e4,#f6f6f6 35%,#ffffff 70%,#f4f4f4);border-left:1px solid #c4c4c4">
<div class="a" style="left:1px;top:3px;width:12px;height:14px;border-radius:6px 6px 0 0;background:linear-gradient(90deg,#c8c8c8,#e8e8e8 50%,#d8d8d8)"></div>
<div class="a" style="left:1px;top:139px;width:12px;height:22px;border-radius:6px;background:linear-gradient(90deg,#1a5ac8,#5aa0f0 40%,#a8d8ff 70%,#4a90e8);box-shadow:inset 0 0 0 1px rgba(20,70,170,.7)"></div>
<div class="a" style="left:1px;top:614px;width:12px;height:15px;border-radius:0 0 6px 6px;background:linear-gradient(90deg,#d0d0d0,#f0f0f0 50%,#dcdcdc)"></div>
<div class="a" style="left:0;top:629px;width:14px;height:33px;background:linear-gradient(90deg,#f0f0f0,#fafafa)"><div class="a" style="left:3.5px;top:5px;width:0;height:0;border-bottom:6px solid #505050;border-left:3.5px solid transparent;border-right:3.5px solid transparent"></div><div class="a" style="left:0;top:16px;width:14px;height:1px;background:#d0d0d0"></div><div class="a" style="left:3.5px;top:22px;width:0;height:0;border-top:6px solid #505050;border-left:3.5px solid transparent;border-right:3.5px solid transparent"></div></div>
</div>
<div class="a" style="left:0;top:681px;width:805px;height:10px;background:linear-gradient(#fdfdfd,#e4e4e4);border-top:1px solid #9a9a9a"><div class="a" style="left:402px;top:2px;width:5px;height:5px;border-radius:50%;border:1px solid #999"></div></div>
</div>
<div id="bot">
<div class="btn" style="left:9px;width:47px"><div class="a" style="left:22px;top:0;width:1px;height:20px;background:#646464"></div><div class="a" style="left:7px;top:9px;width:8px;height:2px;background:#1a1a1a"></div><div class="a" style="left:10px;top:6px;width:2px;height:8px;background:#1a1a1a"></div><div class="a" style="left:30px;top:9px;width:8px;height:2px;background:#1a1a1a"></div></div>
<div class="btn" style="left:64px;width:42px"><svg class="a" style="left:6px;top:2px" width="16" height="16" viewBox="0 0 16 16"><g fill="#222"><circle cx="8" cy="8" r="5"/><rect x="6.6" y="0.5" width="2.8" height="15"/><rect x="0.5" y="6.6" width="15" height="2.8"/><rect x="6.6" y="0.5" width="2.8" height="15" transform="rotate(45 8 8)"/><rect x="6.6" y="0.5" width="2.8" height="15" transform="rotate(-45 8 8)"/></g><circle cx="8" cy="8" r="2" fill="#ddd"/></svg><div class="a" style="left:27px;top:7px;width:0;height:0;border-top:5px solid #222;border-left:4px solid transparent;border-right:4px solid transparent"></div></div>
<div class="btn" style="left:187px;width:212px;overflow:hidden">
 <svg class="a" style="left:9px;top:3px" width="14" height="14" viewBox="0 0 14 14"><path d="M7 .5 L8.8 5 L13.5 5.2 L9.8 8.2 L11.1 13 L7 10.3 L2.9 13 L4.2 8.2 L.5 5.2 L5.2 5Z" fill="#222"/></svg>
 <div class="a" style="left:29px;top:3px;font-size:12px;color:#111">All</div>
 <div class="a" style="left:54px;top:0;width:64px;height:20px;background:linear-gradient(#7a7a7a,#6a6a6a 50%,#5e5e5e 51%,#686868);border-left:1px solid #555;border-right:1px solid #555"><svg class="a" style="left:9px;top:3px" width="12" height="14" viewBox="0 0 12 14"><path d="M.5 .5 H7.5 L11.5 4.5 V13.5 H.5Z" fill="#f4f4f4"/><path d="M7.5 .5 V4.5 H11.5" fill="#aaa"/></svg><div class="a" style="left:28px;top:3px;font-size:12px;color:#eee">Files</div></div>
 <svg class="a" style="left:127px;top:4px" width="15" height="12" viewBox="0 0 15 12"><rect x=".5" y=".5" width="14" height="11" fill="#222"/><path d="M1 1.5 L7.5 7 L14 1.5" stroke="#ddd" stroke-width="1.3" fill="none"/></svg>
 <div class="a" style="left:147px;top:3px;font-size:12px;color:#111;letter-spacing:-.3px">Messages</div>
</div>
<div class="a" style="left:484px;top:8px;font-size:12px;color:#111;letter-spacing:.18px;white-space:nowrap">313 items (in 200,675 of 206,464 posts)</div>
<div class="a" style="left:790px;top:13px;width:9px;height:8px;border:1px solid #333;background:#fff"><div class="a" style="left:2px;top:1px;width:3px;height:3px;border-radius:50%;background:#222"></div><div class="a" style="left:1px;top:4px;width:5px;height:2px;background:#222"></div></div>
<div class="a" style="left:807px;top:13px;width:140px;height:6px;border-radius:3px;background:linear-gradient(#6a6a6a,#8a8a8a);box-shadow:0 1px 0 rgba(255,255,255,.5)"></div>
<div class="a" style="left:864px;top:10px;width:12px;height:12px;border-radius:50%;background:radial-gradient(circle,#555 0,#555 18%,#f4f4f4 30%,#cfcfcf 100%);box-shadow:0 0 0 1px #8a8a8a"></div>
<div class="a" style="left:955px;top:10px;width:16px;height:12px;border:1px solid #333;background:#f0f0f0"><div class="a" style="left:4px;top:1px;width:6px;height:6px;border-radius:50%;background:#222"></div><div class="a" style="left:2px;top:6px;width:10px;height:5px;border-radius:4px 4px 0 0;background:#222"></div></div>
<svg class="a" style="left:975px;top:18px" width="12" height="12" viewBox="0 0 12 12"><path d="M1 11 L11 1 M5 11 L11 5 M9 11 L11 9" stroke="#8a8a8a" stroke-width="1"/></svg>
</div>
</div>
</body></html>
